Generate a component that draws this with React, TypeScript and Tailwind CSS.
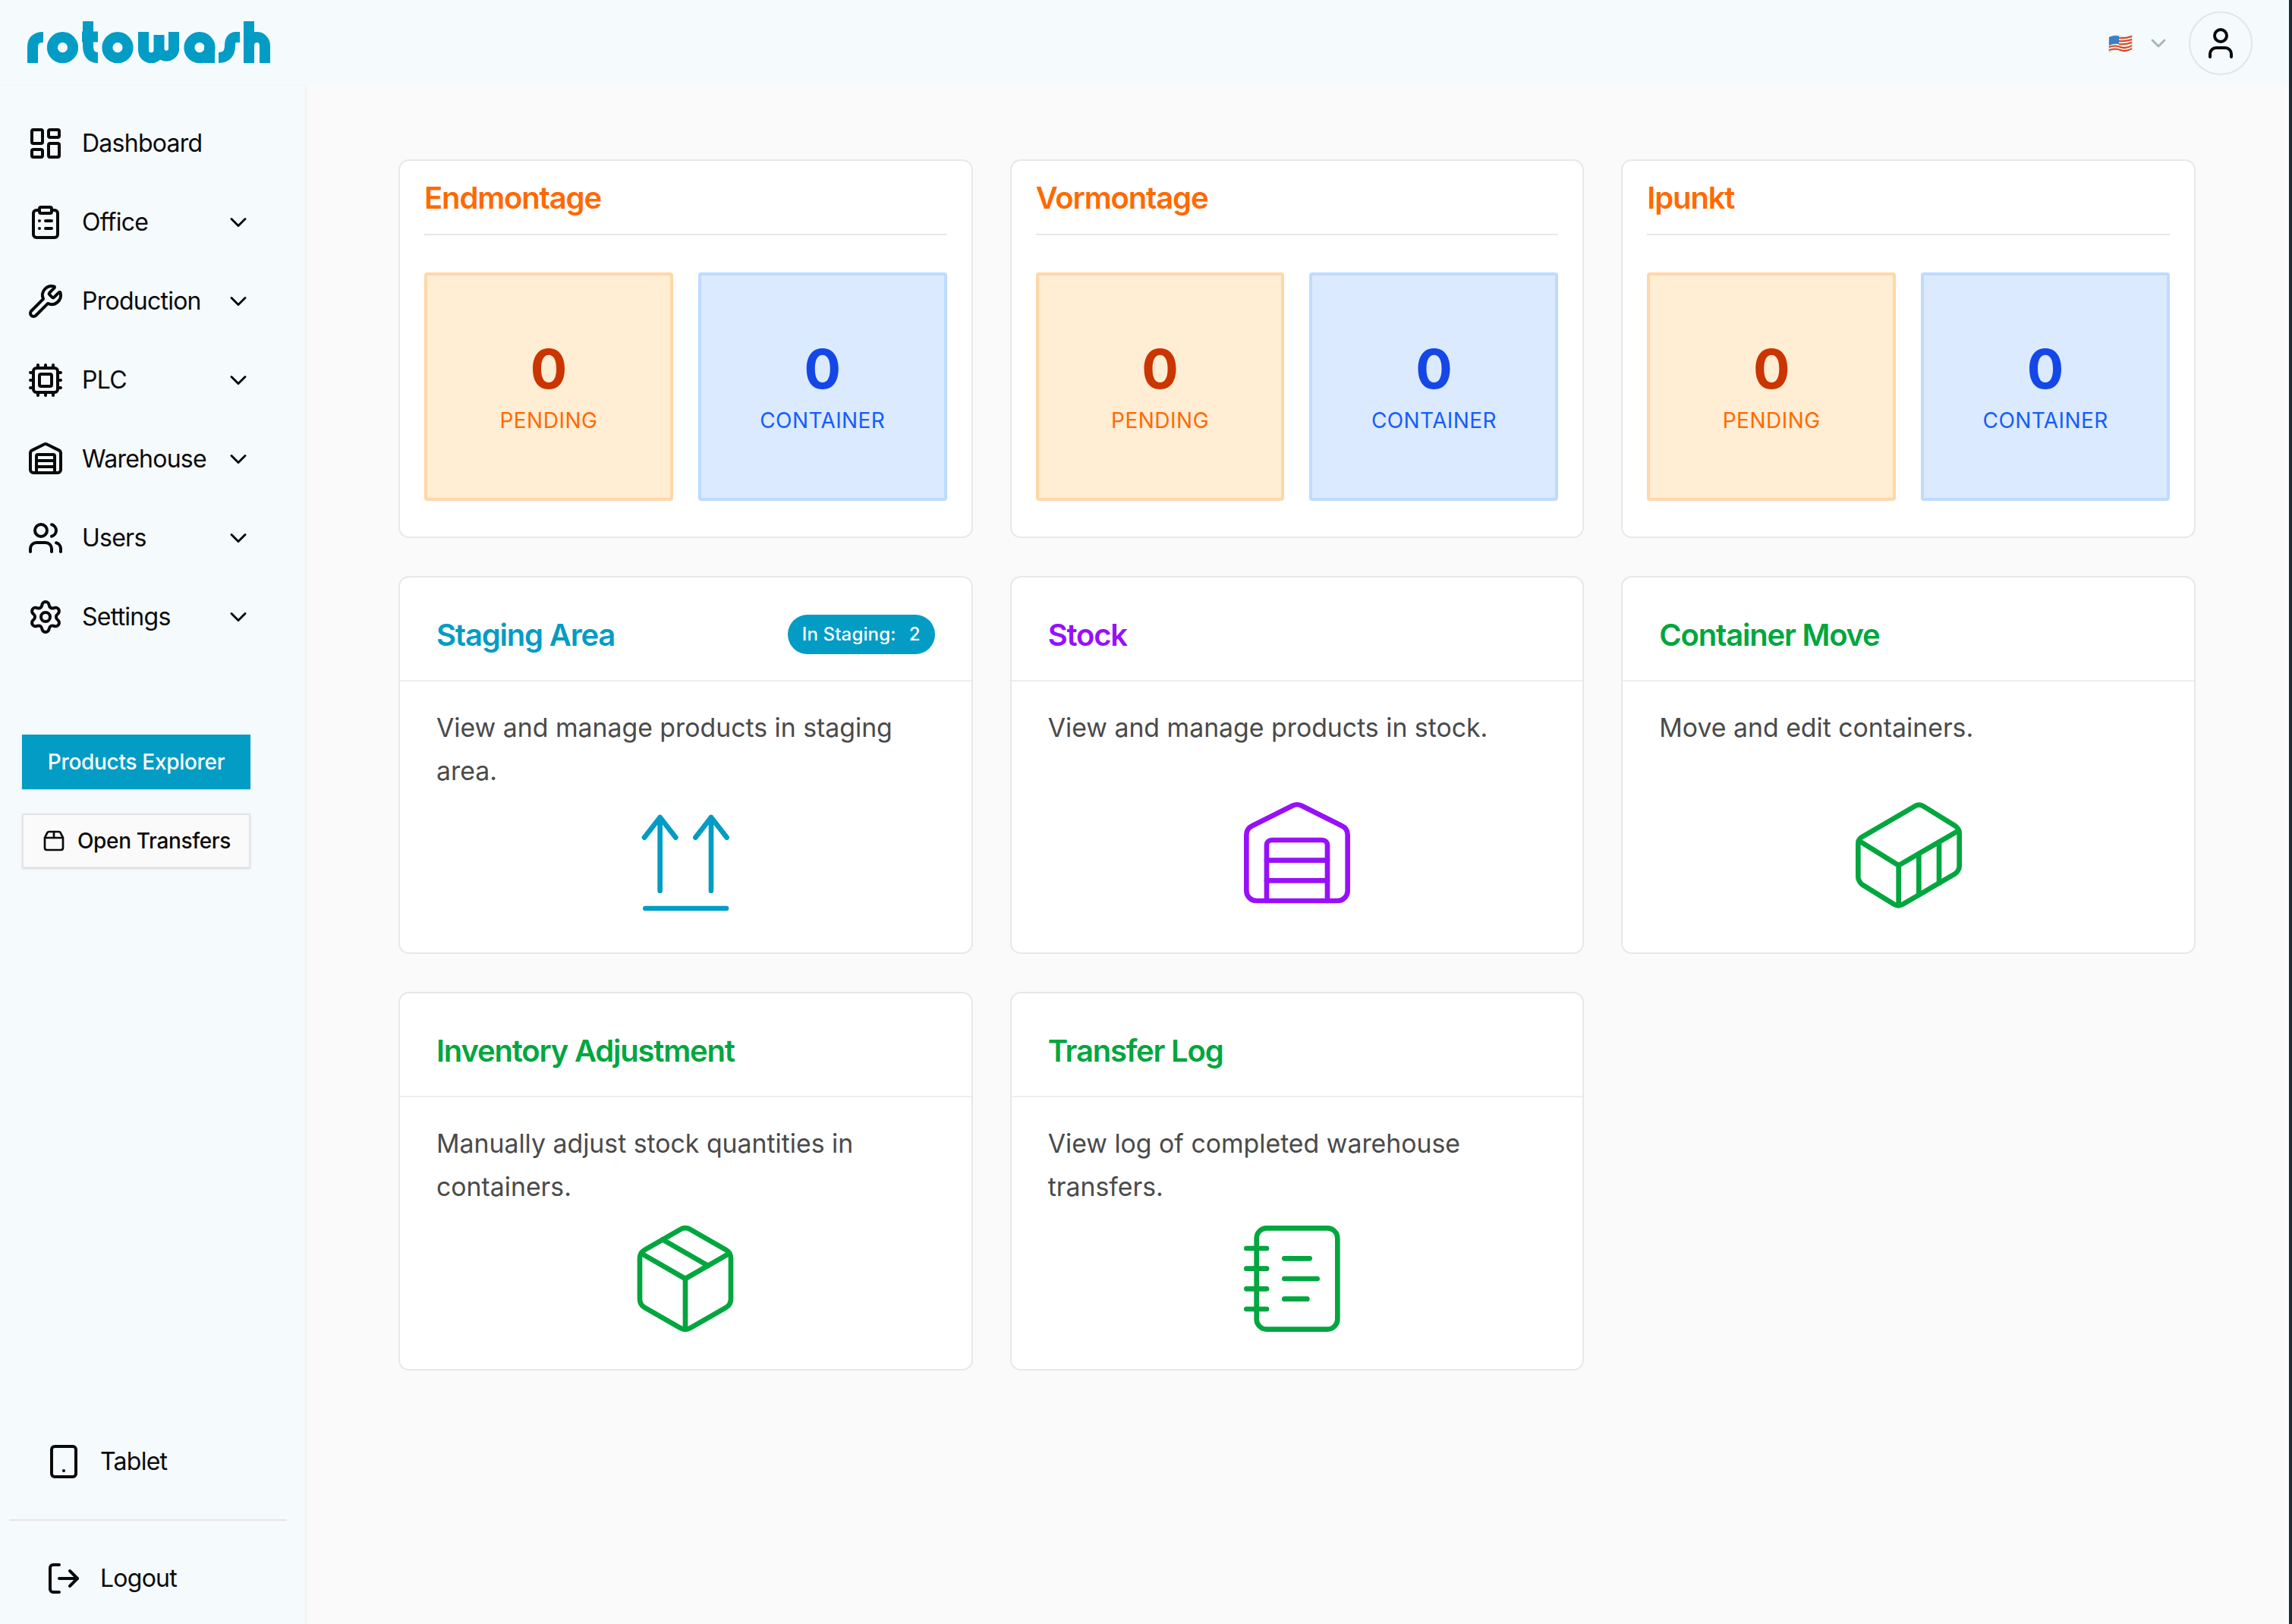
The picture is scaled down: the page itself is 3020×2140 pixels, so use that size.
import React from 'react';
import {
  ChevronDown,
  ClipboardList,
  Container,
  Cpu,
  LayoutDashboard,
  LogOut,
  NotebookText,
  Package,
  Package2,
  Settings,
  Tablet,
  User,
  Users,
  Warehouse,
  Wrench,
} from 'lucide-react';

const font = { fontFamily: 'Inter, "Noto Sans", sans-serif' };

const navItems = [
  { label: 'Dashboard', icon: LayoutDashboard, arrow: false },
  { label: 'Office', icon: ClipboardList, arrow: true },
  { label: 'Production', icon: Wrench, arrow: true },
  { label: 'PLC', icon: Cpu, arrow: true },
  { label: 'Warehouse', icon: Warehouse, arrow: true },
  { label: 'Users', icon: Users, arrow: true },
  { label: 'Settings', icon: Settings, arrow: true },
];

const RotowashLogo = () => (
  <svg viewBox="36 28 320 56" width={320} height={56} fill="none" stroke="#029cc5" strokeWidth={14} role="img" aria-label="rotowash">
    <path d="M43 83V62Q43 49 57 49" />
    <circle cx={82.5} cy={62.7} r={13.6} />
    <path d="M116 28V60Q116 76 129 76M108 48.5H129" />
    <circle cx={155} cy={62.7} r={13.6} />
    <path d="M189 42V66A10 10 0 0 0 209.500 66V46M209.500 66A10 10 0 0 0 229 66V42" />
    <circle cx={263} cy={62.7} r={13.6} />
    <path d="M276 62V83" />
    <path d="M316 49H311Q303 49 303 60Q303 76 288 76" />
    <path d="M328 28V83M349 83V60A10.500 11 0 0 0 328 60" />
  </svg>
);

const UsFlag = () => (
  <svg viewBox="0 0 32 26" width={32} height={26} fill="none">
    <path d="M1 5Q9 1 16 4T31 2V21Q23 24 16 22T1 25Z" fill="#f3f1ee" stroke="#b9b9b9" strokeWidth={0.6} />
    <g stroke="#d8421c" strokeWidth={2}>
      <path d="M14 6Q22 7 31 4" />
      <path d="M14 10Q22 11 31 8" />
      <path d="M14 14Q22 15 31 12" />
      <path d="M1 18Q9 15 16 18T31 16" />
      <path d="M1 22Q9 19 16 22T31 20" />
    </g>
    <path d="M1 5Q7 2 14 3.500V14Q7 13 1 16Z" fill="#3b7fc4" />
  </svg>
);

const ArrowsUp = ({ className }: { className?: string }) => (
  <svg viewBox="0 0 24 24" width={160} height={160} fill="none" stroke="currentColor" strokeWidth={1} strokeLinecap="round" strokeLinejoin="round" className={className}>
    <path d="M7 3v14.500M3.900 7 7 3l3.100 4" />
    <path d="M17.100 3v14.500M14 7l3.100-4 3.100 4" />
    <path d="M4.100 21h16" />
  </svg>
);

const stations = ['Endmontage', 'Vormontage', 'Ipunkt'];

const tiles = [
  { title: 'Staging Area', text: 'View and manage products in staging area.', color: 'text-[#029cc5]', icon: ArrowsUp, iconClass: 'mt-[13px]', badge: 2 },
  { title: 'Stock', text: 'View and manage products in stock.', color: 'text-purple-600', icon: Warehouse, iconClass: 'mt-[60px]' },
  { title: 'Container Move', text: 'Move and edit containers.', color: 'text-green-600', icon: Container, iconClass: 'mt-[60px]' },
  { title: 'Inventory Adjustment', text: 'Manually adjust stock quantities in containers.', color: 'text-green-600', icon: Package, iconClass: 'mt-[13px]' },
  { title: 'Transfer Log', text: 'View log of completed warehouse transfers.', color: 'text-green-600', icon: NotebookText, iconClass: 'mt-[13px]' },
];

const StationCard = ({ name }: { name: string }) => (
  <div className="h-[498.5px] rounded-[14px] border-2 border-[#e8e8e8] bg-white px-[32px]">
    <div className="border-b-2 border-[#e8e8e8] pb-[19px] pt-[21px]">
      <h2 className="text-[40px] font-semibold leading-[56px] tracking-[-1.15px] text-orange-500">{name}</h2>
    </div>
    <div className="mt-[49px] grid grid-cols-2 gap-[33px]">
      <div className="flex h-[301px] flex-col items-center justify-center rounded-[4px] border-4 border-orange-200 bg-orange-100">
        <span className="text-[72px] font-bold leading-[80px] text-orange-700">0</span>
        <span className="mt-2 text-[28px] leading-[40px] tracking-[0.5px] text-orange-500">PENDING</span>
      </div>
      <div className="flex h-[301px] flex-col items-center justify-center rounded-[4px] border-4 border-blue-200 bg-blue-100">
        <span className="text-[72px] font-bold leading-[80px] text-blue-700">0</span>
        <span className="mt-2 text-[28px] leading-[40px] tracking-[0.4px] text-blue-600">CONTAINER</span>
      </div>
    </div>
  </div>
);

type Tile = (typeof tiles)[number];

const TileCard = ({ tile }: { tile: Tile }) => {
  const Icon = tile.icon;
  return (
    <div className="h-[498.5px] rounded-[14px] border-2 border-[#e8e8e8] bg-white">
      <div className="flex h-[137px] items-center justify-between border-b-2 border-[#eeeeee] pl-[48px] pr-[48px] pt-[17px]">
        <h2 className={`text-[40px] font-semibold leading-[56px] tracking-[-1.2px] ${tile.color}`}>{tile.title}</h2>
        {tile.badge && (
          <span className="mb-[2px] flex h-[52px] w-[194px] items-center justify-center gap-[17px] rounded-full bg-[#029cc5] text-[24px] font-medium tracking-[0.15px] text-white">
            <span>In Staging:</span>
            <span>{tile.badge}</span>
          </span>
        )}
      </div>
      <div className="flex flex-col pl-[48px] pr-[48px] pt-[32px]">
        <p className="text-[33.8px] leading-[57px] text-[#4a4a4a]">{tile.text}</p>
        <Icon size={160} strokeWidth={1} className={`${tile.iconClass} mx-auto ${tile.color}`} />
      </div>
    </div>
  );
};

export default function App() {
  return (
    <div style={font} className="flex h-[2140px] w-[3020px] flex-col overflow-hidden border-r-4 border-[#1e2b37] bg-[#fafafa] text-[#0a0a0a]">
      <header className="flex h-[113px] shrink-0 items-center justify-between bg-[#f5fafd] pl-9 pr-[48px]">
        <div className="mb-[2px]">
          <RotowashLogo />
        </div>
        <div className="flex items-center">
          <UsFlag />
          <ChevronDown size={32} className="ml-[18px] text-[#a3b8ab]" />
          <div className="ml-[24px] flex h-[84px] w-[84px] items-center justify-center rounded-full border-2 border-[#e5e5e5]">
            <User size={48} />
          </div>
        </div>
      </header>
      <div className="flex min-h-0 flex-1">
        <aside className="flex w-[402px] shrink-0 flex-col bg-[#f5fafd] pt-6 shadow-[2px_0_3px_rgba(0,0,0,0.04)]">
          <nav className="flex flex-col">
            {navItems.map((item) => {
              const Icon = item.icon;
              return (
                <div key={item.label} className="flex h-[104px] items-center pl-9 pr-[70px]">
                  <Icon size={48} />
                  <span className="ml-[24px] text-[32px] tracking-[-0.75px]">{item.label}</span>
                  {item.arrow && <ChevronDown size={36} className="ml-auto" />}
                </div>
              );
            })}
          </nav>
          <div className="ml-[29px] mt-[103px] flex w-[301px] flex-col gap-[32px]">
            <button className="h-[72px] bg-[#029cc5] text-[28px] font-medium tracking-[-0.3px] text-white shadow-sm">Products Explorer</button>
            <button className="flex h-[72px] items-center gap-[15px] border-2 border-[#e5e5e5] bg-[#fafafa] pl-[24px] text-[28px] font-medium tracking-[-0.35px] shadow-sm">
              <Package2 size={32} />
              Open Transfers
            </button>
          </div>
          <div className="mt-auto pb-2">
            <div className="flex h-[104px] items-center pl-[60px]">
              <Tablet size={48} />
              <span className="ml-[24px] text-[32px] tracking-[-0.75px]">Tablet</span>
            </div>
            <div className="mx-3 my-6 h-[2px] w-[366px] bg-[#e5e5e5]" />
            <div className="flex h-[104px] items-center pl-[60px]">
              <LogOut size={48} />
              <span className="ml-[24px] text-[32px] tracking-[-0.75px]">Logout</span>
            </div>
          </div>
        </aside>
        <main className="flex-1 px-[123px] pt-[97px]">
          <div className="grid grid-cols-3 gap-x-[49px] gap-y-[50px]">
            {stations.map((name) => (
              <StationCard key={name} name={name} />
            ))}
            {tiles.map((tile) => (
              <TileCard key={tile.title} tile={tile} />
            ))}
          </div>
        </main>
      </div>
    </div>
  );
}
